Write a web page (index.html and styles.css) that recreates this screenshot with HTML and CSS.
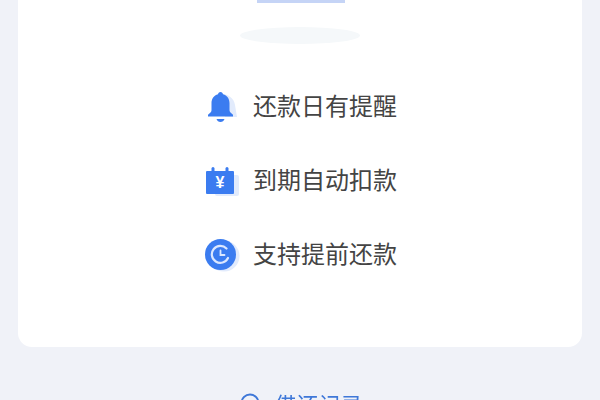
FILE: index.html
```html
<!DOCTYPE html>
<html lang="zh-CN">
<head>
  <meta charset="UTF-8" />
  <title>借还记录</title>
  <link rel="stylesheet" href="styles.css">
</head>
<body>

<div class="card">
  <div class="hero-bar"></div>
  <div class="hero-shadow"></div>

  <ul class="features">
    <li>
      <svg class="icon" viewBox="0 0 36 36">
        <path d="M17 6c6 0 12 4 13 11l2 12H20z" fill="#e2ebfc"/>
        <path d="M15.500 4c1.400 0 2.400 1 2.500 2.300 4.200 1.100 6.500 4.700 6.500 9v7c0 1.700 1.500 3 3.500 4.400v1.800H3v-1.800c2-1.400 3.500-2.700 3.500-4.400v-7c0-4.300 2.300-7.900 6.500-9C13.100 5 14.100 4 15.500 4z" fill="#3b7cf0"/>
        <path d="M11.500 31h8c-.6 1.900-2.100 3-4 3s-3.400-1.100-4-3z" fill="#3b7cf0"/>
      </svg>
      <span>还款日有提醒</span>
    </li>
    <li>
      <svg class="icon" viewBox="0 0 36 36">
        <rect x="10" y="13" width="24" height="21" rx="2" fill="#e2ebfc"/>
        <rect x="1" y="9" width="28" height="23" rx="1" fill="#3b7cf0"/>
        <rect x="6.500" y="5" width="3" height="7" rx="1.500" fill="#3b7cf0"/>
        <rect x="20.500" y="5" width="3" height="7" rx="1.500" fill="#3b7cf0"/>
        <text class="yen" x="15" y="26" text-anchor="middle">¥</text>
      </svg>
      <span>到期自动扣款</span>
    </li>
    <li>
      <svg class="icon" viewBox="0 0 36 36">
        <circle cx="19" cy="20" r="15.500" fill="#e2ebfc"/>
        <circle cx="15.500" cy="18.500" r="15.500" fill="#3b7cf0"/>
        <path d="M21.500 12.500a8.500 8.500 0 1 0 1.500 9.500" fill="none" stroke="#dbe7ff" stroke-width="2.200" stroke-linecap="round"/>
        <path d="M15.500 14.500v4.500h4" fill="none" stroke="#dbe7ff" stroke-width="1.800" stroke-linecap="round"/>
      </svg>
      <span>支持提前还款</span>
    </li>
  </ul>
</div>

<div class="records">
  <svg class="records-icon" viewBox="0 0 20 20">
    <circle cx="10" cy="10" r="8.500" fill="none" stroke="#3f78d8" stroke-width="1.800"/>
  </svg>
  <span>借还记录</span>
</div>

</body>
</html>
```

FILE: styles.css
```css
html, body {
  height: 400px;
  overflow: hidden;
}

body {
  font-family: "Noto Sans CJK SC", "Noto Sans", sans-serif;
  background-color: #f0f2f8;
  margin: 0;
  padding: 0;
  filter: blur(0.6px);
}

.card {
  height: 347px;
  margin: 0 18px;
  background: #fff;
  border-radius: 0 0 14px 14px;
  overflow: hidden;
}

.hero-bar {
  width: 88px;
  height: 3px;
  margin-left: 239px;
  background-color: #c5d4f6;
}

.hero-shadow {
  width: 120px;
  height: 17px;
  margin: 24px auto 0;
  border-radius: 50%;
  background-color: #f5f8fa;
}

.features {
  width: 192px;
  margin: 25px auto 0;
  padding: 0 0 0 2px;
  list-style: none;
}

.features li {
  display: flex;
  align-items: center;
  height: 74px;
  gap: 12px;
  font-size: 24px;
  color: #444;
  white-space: nowrap;
}

.features span {
  padding-bottom: 4px;
}

.icon {
  width: 36px;
  height: 36px;
  flex: none;
}

.yen {
  font-family: "Liberation Sans", sans-serif;
  font-size: 16px;
  font-weight: bold;
  fill: #fff;
}

.records {
  display: flex;
  justify-content: center;
  align-items: center;
  gap: 14px;
  margin-top: 41px;
  padding-left: 3px;
  font-size: 22px;
  line-height: 30px;
  color: #3f78d8;
}

.records-icon {
  width: 20px;
  height: 20px;
}
```
